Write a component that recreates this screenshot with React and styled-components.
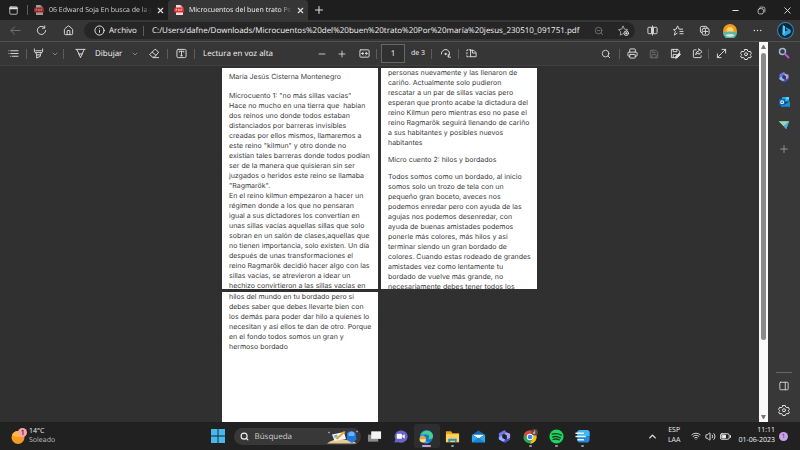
import React from 'react';
import styled, { createGlobalStyle } from 'styled-components';
import {
  ChevronDown,
  ChevronUp,
  House,
  Info,
  Minus,
  Plus,
  Printer,
  Save,
  Search,
  Wifi,
  Volume2,
  X,
  ZoomOut,
} from 'lucide-react';

const GlobalStyle = createGlobalStyle`
  * {
    box-sizing: border-box;
  }

  body {
    margin: 0;
    background: #303030;
    color: #f0f0f0;
    font-family: 'Open Sans', 'Noto Sans', sans-serif;
    font-size: 8px;
    text-rendering: geometricPrecision;
  }

  input,
  button {
    text-rendering: inherit;
  }

  svg {
    display: block;
    flex-shrink: 0;
  }
`;

const Desktop = styled.div`
  display: flex;
  flex-direction: column;
  height: 100vh;
  overflow: hidden;
`;

const IconButton = styled.button`
  display: flex;
  align-items: center;
  justify-content: center;
  flex-shrink: 0;
  width: ${props => props.$w || 26}px;
  height: 20px;
  padding: 0;
  border: none;
  background: none;
  color: ${props => (props.$dim ? '#777' : '#e2e2e2')};
`;

const Divider = styled.div`
  width: 1px;
  height: 10px;
  flex-shrink: 0;
  background: #5c5c5c;
`;

/* ---- title bar ---- */

const TitleBar = styled.header`
  display: flex;
  height: 20px;
  flex-shrink: 0;
  align-items: center;
  background: #1e1e1e;
`;

const Tab = styled.div`
  display: flex;
  align-items: center;
  width: 140px;
  height: 20px;
  padding-left: 6px;
  border-radius: 4px 4px 0 0;
  background: ${props => (props.$active ? '#363636' : 'transparent')};
  color: ${props => (props.$active ? '#f4f4f4' : '#d0d0d0')};
`;

const TabTitle = styled.span`
  flex: 1;
  overflow: hidden;
  margin-left: 5px;
  font-size: 7px;
  white-space: nowrap;
  mask-image: linear-gradient(to right, #000 88%, transparent);
`;

const WindowButtons = styled.div`
  display: flex;
  margin-left: auto;
`;

/* ---- address row ---- */

const NavBar = styled.nav`
  display: flex;
  height: 21px;
  flex-shrink: 0;
  align-items: center;
  padding-left: 2px;
  background: #363636;
`;

const AddressBar = styled.div`
  display: flex;
  flex: 1;
  min-width: 0;
  align-items: center;
  height: 17px;
  margin: 0 4px 0 3px;
  padding: 0 2px 0 10px;
  border-radius: 9px;
  background: #262626;
  gap: 4px;
`;

const AddressInput = styled.input`
  flex: 1;
  min-width: 0;
  margin-left: 4px;
  padding: 0;
  border: none;
  outline: none;
  background: none;
  color: #f4f4f4;
  font: 8px 'Open Sans', 'Noto Sans', sans-serif;
`;

const Scheme = styled.span`
  width: 30px;
  font-size: 8px;
`;

/* ---- pdf viewer ---- */

const Workspace = styled.div`
  display: flex;
  flex: 1;
  min-height: 0;
  border-top: 1px solid #505050;
`;

const Viewer = styled.main`
  display: flex;
  flex: 1;
  flex-direction: column;
  min-width: 0;
`;

const PdfToolbar = styled.div`
  display: flex;
  align-items: center;
  height: 24px;
  flex-shrink: 0;
  background: #363636;
  border-bottom: 1px solid #404040;
`;

const ToolGroup = styled.div`
  display: flex;
  align-items: center;
  margin-left: ${props => (props.$end ? 'auto' : 0)};
`;

const TextButton = styled.button`
  padding: 0;
  margin-left: ${props => props.$gap || 0}px;
  width: ${props => props.$w}px;
  border: none;
  background: none;
  color: #f4f4f4;
  font: 8px 'Open Sans', 'Noto Sans', sans-serif;
  text-align: left;
  white-space: nowrap;
`;

const PageInput = styled.input`
  width: 24px;
  height: 19px;
  margin: 0 6px 0 4px;
  padding: 0;
  border: 1px solid #666;
  background: #303030;
  color: #f4f4f4;
  font: 8px 'Open Sans', 'Noto Sans', sans-serif;
  text-align: center;
`;

const PageTotal = styled.label`
  width: 20px;
  font-size: 7px;
`;

const Pages = styled.div`
  display: grid;
  flex: 1;
  grid-template-columns: 156px 156px;
  grid-auto-rows: 221px;
  gap: 3px;
  justify-content: center;
  min-height: 0;
  padding-top: 2px;
  overflow: hidden;
  background: #303030;
`;

const Page = styled.article`
  overflow: hidden;
  padding: ${props => (props.$first ? 4 : 0)}px 0 0 7px;
  background: #fff;
  color: #3a3a3a;
  font: 7px/10px Inter, Roboto, sans-serif;
  white-space: pre;
`;

const Paragraph = styled.p`
  margin: 0 0 ${props => (props.$heading ? 9 : 7)}px;
`;

const Scrollbar = styled.div`
  display: flex;
  flex-direction: column;
  align-items: center;
  justify-content: space-between;
  width: 9px;
  padding: 3px 0;
  background: #fafafa;
`;

const Thumb = styled.div`
  width: 5px;
  flex: 1;
  margin: 4px 0 75px;
  border-radius: 3px;
  background: #8a8a8a;
`;

const SideBar = styled.aside`
  display: flex;
  flex-direction: column;
  align-items: center;
  width: 32px;
  padding-bottom: 2px;
  background: #383838;
`;

const SideTools = styled.div`
  display: flex;
  flex-direction: column;
  gap: 4px;
  padding-top: ${props => (props.$bottom ? 3 : 1)}px;
  margin-top: ${props => (props.$bottom ? 'auto' : 0)};
  border-top: ${props => (props.$bottom ? '1px solid #666' : 'none')};
`;

/* ---- task bar ---- */

const TaskBar = styled.footer`
  display: grid;
  grid-template-columns: 1fr auto 1fr;
  height: 28px;
  flex-shrink: 0;
  align-items: center;
  background: #212121;
`;

const Weather = styled.div`
  display: flex;
  align-items: center;
  gap: 2px;
  padding-left: 11px;
  font-size: 7px;
  line-height: 9px;
`;

const Muted = styled.div`
  color: #bbb;
`;

const Apps = styled.div`
  display: flex;
  align-items: center;
`;

const SearchBox = styled.label`
  display: flex;
  align-items: center;
  gap: 6px;
  width: 127px;
  height: 17px;
  margin: 0 1px 0 3px;
  padding: 0 2px 0 6px;
  border-radius: 9px;
  background: #383838;
`;

const SearchInput = styled.input`
  flex: 1;
  min-width: 0;
  padding: 0;
  border: none;
  outline: none;
  background: none;
  font: 8px 'Open Sans', 'Noto Sans', sans-serif;

  &::placeholder {
    color: #ccc;
  }
`;

const AppButton = styled.button`
  display: flex;
  flex-direction: column;
  align-items: center;
  justify-content: flex-end;
  gap: 1px;
  width: 26px;
  height: 24px;
  padding: 0 0 1px;
  border: none;
  border-radius: 3px;
  background: ${props => (props.$active ? '#2e2e2e' : 'none')};

  &::after {
    content: '';
    width: ${props => (props.$active ? 9 : 3)}px;
    height: 2px;
    border-radius: 1px;
    background: ${props => (props.$active ? '#c9a0dc' : props.$open ? '#999' : 'transparent')};
  }
`;

const Tray = styled.div`
  display: flex;
  align-items: center;
  justify-content: flex-end;
  padding-right: 12px;
  font-size: 7px;
  line-height: 10px;
`;

const TrayIcons = styled.div`
  display: flex;
  align-items: center;
  gap: 4px;
  margin: 0 7px 0 11px;
`;

const Language = styled.div`
  margin-left: 8px;
  text-align: center;
`;

const Clock = styled.time`
  text-align: right;
`;

const Count = styled.div`
  width: 9px;
  height: 9px;
  margin-left: 4px;
  border-radius: 50%;
  background: #c8a2e8;
  color: #3b2150;
  font-size: 6px;
  line-height: 9px;
  text-align: center;
`;

/* line icons, drawn on a 24 grid */
const Line = ({ size = 11, children }) => (
  <svg width={size} height={size} viewBox="0 0 24 24" fill="none" stroke="currentColor" strokeWidth="2" strokeLinecap="round" strokeLinejoin="round">
    {children}
  </svg>
);

const Art = ({ size = 15, children }) => (
  <svg width={size} height={size} viewBox="0 0 32 32">{children}</svg>
);

const PdfIcon = ({ dim }) => (
  <svg width="10" height="10" viewBox="0 0 20 20" opacity={dim ? 0.65 : 1}>
    <path d="M4 0h9l5 5v15H4z" fill="#f2dede" />
    <path d="M13 0l5 5h-5z" fill="#c99" />
    <rect x="0" y="5" width="20" height="10" rx="2" fill="#e02b2b" />
    <path d="M4 12V8h2v2H4M9 8v4h1.500l1-1V9l-1-1H9M14 12V8h3M14 10h2" stroke="#fff" fill="none" />
  </svg>
);

const GearIcon = () => (
  <Line size={12}>
    <path d="M9.500 3h5l.8 3 2.500 1.400 3-.8 2 4.300-2 1.900v1.400l2 1.900-2 3.700-3-.8-2.500 1.400-.8 2.600h-5l-.8-2.600-2.500-1.400-3 .8-2-3.700 2-1.900v-1.400l-2-1.900 2-4.300 3 .8L8.700 6z" />
    <circle cx="12" cy="12.500" r="3" />
  </Line>
);

const CopilotRing = ({ size = 13 }) => (
  <Art size={size}>
    <path d="M16 2L4 9v13l7 4V13l9-6z" fill="#6f74e8" />
    <path d="M20 7l-5 3 6 4v9l7-4V10z" fill="#a9a2f4" />
    <path d="M11 18v8l6 4 11-7v-4l-10 4z" fill="#4b4fc4" />
    <path d="M4 18l7-4v5l7 4-5 4-9-5z" fill="#8fb6ff" />
  </Art>
);

const TitleRow = () => (
  <TitleBar>
    <IconButton $w={27} aria-label="Pestañas">
      <Line size={9}>
        <rect x="2" y="2" width="20" height="20" rx="3" />
        <path d="M3 6h18" strokeWidth="5" />
      </Line>
    </IconButton>
    <Divider />
    <Tab>
      <PdfIcon dim />
      <TabTitle>06 Edward Soja En busca de la ju</TabTitle>
      <IconButton $w={16} aria-label="Cerrar"><X size={9} strokeWidth={3} /></IconButton>
    </Tab>
    <Tab $active>
      <PdfIcon />
      <TabTitle>Microcuentos del buen trato Por</TabTitle>
      <IconButton $w={16} aria-label="Cerrar"><X size={9} strokeWidth={3} /></IconButton>
    </Tab>
    <IconButton $w={22} aria-label="Nueva pestaña"><Plus size={12} /></IconButton>
    <WindowButtons>
      <IconButton aria-label="Minimizar"><Minus size={9} strokeWidth={3} /></IconButton>
      <IconButton aria-label="Restaurar">
        <Line size={9}>
          <rect x="3" y="7" width="14" height="14" rx="4" />
          <path d="M8 3h9q4 0 4 4v9" />
        </Line>
      </IconButton>
      <IconButton aria-label="Cerrar ventana"><X size={11} /></IconButton>
    </WindowButtons>
  </TitleBar>
);

const AddressRow = () => (
  <NavBar>
    <IconButton $dim aria-label="Atrás">
      <Line><path d="M22 12H2M10 4l-8 8 8 8" /></Line>
    </IconButton>
    <IconButton $w={27} aria-label="Actualizar">
      <Line><path d="M21 12a9 9 0 1 1-3-7M19 2v5h-5" /></Line>
    </IconButton>
    <IconButton aria-label="Inicio"><House size={11} /></IconButton>
    <AddressBar>
      <Info size={11} />
      <Scheme>Archivo</Scheme>
      <Divider />
      <AddressInput
        aria-label="Dirección"
        defaultValue="C:/Users/dafne/Downloads/Microcuentos%20del%20buen%20trato%20Por%20maría%20jesus_230510_091751.pdf"
      />
      <IconButton $w={20} $dim aria-label="Zoom"><ZoomOut size={10} /></IconButton>
      <IconButton $w={20} aria-label="Favorito">
        <Line>
          <path d="M11 19l-6 3 1-7-5-5 7-1 3-7 3 7 7 1-3 3" opacity=".7" />
          <circle cx="18" cy="18" r="5" />
          <path d="M18 16v4M16 18h4" />
        </Line>
      </IconButton>
    </AddressBar>
    <IconButton aria-label="Pantalla dividida">
      <Line>
        <path d="M9 5H4q-2 0-2 2v10q0 2 2 2h5zM15 5h5q2 0 2 2v10q0 2-2 2h-5zM12 2v20" />
      </Line>
    </IconButton>
    <IconButton aria-label="Favoritos">
      <Line>
        <path d="M9 18l-6 4 2-8-4-4 6-1 3-7 3 7h8M15 14h7M15 19h7" />
      </Line>
    </IconButton>
    <IconButton aria-label="Colecciones">
      <Line>
        <path d="M6 17q-3 0-3-4V6q0-3 3-3h9q3 0 3 4" />
        <rect x="7" y="7" width="15" height="15" rx="4" />
        <path d="M14 10v9M10 14h9" />
      </Line>
    </IconButton>
    <IconButton aria-label="Perfil">
      <Art size={14}>
        <circle cx="16" cy="16" r="16" fill="#f39a1e" />
        <circle cx="16" cy="15" r="8" fill="#ffd469" />
        <path d="M0 19q16-4 32 0a16 16 0 0 1-32 0" fill="#5eb5a7" />
        <path d="M5 25q11-4 22 0a16 16 0 0 1-22 0" fill="#d7e7cd" />
      </Art>
    </IconButton>
    <IconButton $w={28} aria-label="Más">
      <Line><path d="M5 12h.1M12 12h.1M19 12h.1" strokeWidth="3" /></Line>
    </IconButton>
    <IconButton $w={29} aria-label="Bing">
      <Art size={17}>
        <circle cx="16" cy="16" r="15" fill="#08283f" stroke="#47809b" strokeWidth="2" />
        <path d="M11 6l4 2v10l6-3-4-2-1-3 9 4q3 5-2 8l-9 5-4-3z" fill="#2aa5e8" />
        <path d="M11 6l4 2v13l-4 3z" fill="#4dd0f4" />
      </Art>
    </IconButton>
  </NavBar>
);

const PdfTools = () => (
  <PdfToolbar>
    <ToolGroup>
      <IconButton aria-label="Contenido">
        <Line><path d="M2 6h.1M2 12h.1M5 18h.1M6 6h16M6 12h16M9 18h13" /></Line>
      </IconButton>
      <Divider />
      <IconButton $w={23} aria-label="Resaltar">
        <Line>
          <path d="M3 2v5q0 3 3 3h12q3 0 3-3V2M6 10l2 5h8l2-5M8 15v7l8-4v-3M6 6h12" />
        </Line>
      </IconButton>
      <IconButton $w={10} aria-label="Opciones de resaltado"><ChevronDown size={8} color="#aaa" /></IconButton>
      <IconButton $w={6} as="span"><Divider /></IconButton>
      <IconButton $w={29} aria-label="Lápiz">
        <Line><path d="M2 3h20M4 3l8 18 8-18M8 13h8" /></Line>
      </IconButton>
      <TextButton $w={34}>Dibujar</TextButton>
      <IconButton $w={12} aria-label="Opciones de dibujo"><ChevronDown size={8} color="#aaa" /></IconButton>
      <IconButton aria-label="Borrar">
        <Line>
          <path d="M14 3l7 6-9 11H8l-6-5zM7 9l8 7M9 21h12" />
        </Line>
      </IconButton>
      <Divider />
      <IconButton aria-label="Agregar texto">
        <Line>
          <rect x="2" y="3" width="20" height="18" rx="3" />
          <path d="M7 9V7h10v2M12 7v10M10 17h4" />
        </Line>
      </IconButton>
      <Divider />
      <TextButton $w={109} $gap={8}>Lectura en voz alta</TextButton>
    </ToolGroup>
    <ToolGroup>
      <IconButton $w={20} aria-label="Alejar"><Minus size={10} /></IconButton>
      <IconButton $w={20} aria-label="Acercar"><Plus size={10} /></IconButton>
      <IconButton $w={24} aria-label="Ajustar a la página">
        <Line>
          <rect x="2" y="4" width="20" height="16" rx="2" />
          <path d="M9 9l-3 3 3 3M15 9l3 3-3 3M6 12h4M14 12h4" />
        </Line>
      </IconButton>
      <Divider />
      <PageInput id="page" defaultValue="1" />
      <PageTotal htmlFor="page">de 3</PageTotal>
      <Divider />
      <IconButton aria-label="Girar">
        <Line>
          <path d="M3 13a9 9 0 1 1 15 6M18 14v6h5" />
          <circle cx="12" cy="13" r="1.500" fill="currentColor" />
        </Line>
      </IconButton>
      <Divider />
      <IconButton $w={24} aria-label="Vista de página">
        <Line>
          <path d="M10 4H7M4 4H2v2M2 10v3M2 17v2h3M8 19h2" />
          <path d="M10 4v15h12V10l-5-5h-3v6h7M10 5h4" />
        </Line>
      </IconButton>
    </ToolGroup>
    <ToolGroup $end>
      <IconButton aria-label="Buscar"><Search size={10} /></IconButton>
      <Divider />
      <IconButton $w={24} aria-label="Imprimir"><Printer size={11} /></IconButton>
      <IconButton $w={20} $dim aria-label="Guardar"><Save size={10} /></IconButton>
      <IconButton $w={22} aria-label="Guardar como">
        <Line>
          <path d="M10 21H3V3h14l4 4v3M7 3v5h8V3M7 21v-7h7" />
          <path d="M12 22l1-4 7-7 3 3-7 7z" fill="currentColor" />
        </Line>
      </IconButton>
      <IconButton $w={22} aria-label="Compartir">
        <Line>
          <path d="M9 4H5q-2 0-2 2v13q0 2 2 2h13q2 0 2-2v-2M15 2l7 6-7 6v-3q-5 0-7 4 0-8 7-9z" />
        </Line>
      </IconButton>
      <Divider />
      <IconButton $w={24} aria-label="Pantalla completa">
        <Line><path d="M3 21L21 3M13 3h8v8M3 13v8h8" /></Line>
      </IconButton>
      <IconButton aria-label="Configuración"><GearIcon /></IconButton>
    </ToolGroup>
  </PdfToolbar>
);

const pageOne = `Microcuento 1: "no más sillas vacías"
Hace no mucho en una tierra que  habían
dos reinos uno donde todos estaban
distanciados por barreras invisibles
creadas por ellos mismos, llamaremos a
este reino "kilmun" y otro donde no
existían tales barreras donde todos podían
ser de la manera que quisieran sin ser
juzgados o heridos este reino se llamaba
"Ragmarök".
En el reino kilmun empezaron a hacer un
régimen donde a los que no pensaran
igual a sus dictadores los convertían en
unas sillas vacías aquellas sillas que solo
sobran en un salón de clases,aquellas que
no tienen importancia, solo existen. Un día
después de unas transformaciones el
reino Ragmarök decidió hacer algo con las
sillas vacías, se atrevieron a idear un
hechizo convirtieron a las sillas vacías en`;

const pageTwo = `personas nuevamente y las llenaron de
cariño. Actualmente solo pudieron
rescatar a un par de sillas vacías pero
esperan que pronto acabe la dictadura del
reino Kilmun pero mientras eso no pase el
reino Ragmarök seguirá llenando de cariño
a sus habitantes y posibles nuevos
habitantes`;

const pageTwoStory = `Todos somos como un bordado, al inicio
somos solo un trozo de tela con un
pequeño gran boceto, aveces nos
podemos enredar pero con ayuda de las
agujas nos podemos desenredar, con
ayuda de buenas amistades podemos
ponerle más colores, más hilos y así
terminar siendo un gran bordado de
colores. Cuando estas rodeado de grandes
amistades vez como lentamente tu
bordado de vuelve más grande, no
necesariamente debes tener todos los`;

const pageThree = `hilos del mundo en tu bordado pero si
debes saber que debes llevarte bien con
los demás para poder dar hilo a quienes lo
necesitan y así ellos te dan de otro. Porque
en el fondo todos somos un gran y
hermoso bordado`;

const Document = () => (
  <Pages>
    <Page $first>
      <Paragraph $heading>María Jesús Cisterna Montenegro</Paragraph>
      <Paragraph>{pageOne}</Paragraph>
    </Page>
    <Page>
      <Paragraph>{pageTwo}</Paragraph>
      <Paragraph>Micro cuento 2: hilos y bordados</Paragraph>
      <Paragraph>{pageTwoStory}</Paragraph>
    </Page>
    <Page>
      <Paragraph>{pageThree}</Paragraph>
    </Page>
  </Pages>
);

const Side = () => (
  <SideBar>
    <SideTools>
      <IconButton aria-label="Buscar en la barra">
        <Line size={12}>
          <circle cx="9" cy="9" r="6" stroke="#9fb8d8" strokeWidth="3" />
          <path d="M14 14l7 7" stroke="#b55ad6" strokeWidth="4" />
        </Line>
      </IconButton>
      <IconButton aria-label="Microsoft 365"><CopilotRing size={12} /></IconButton>
      <IconButton aria-label="Outlook">
        <Art size={11}>
          <path d="M9 3h20v13H9z" fill="#28a8ea" />
          <path d="M20 3h9v7h-9z" fill="#50d9ff" />
          <path d="M6 15l13 8 13-8v16H6z" fill="#1490df" />
          <rect x="0" y="9" width="18" height="18" rx="2" fill="#0868b8" />
          <circle cx="9" cy="18" r="4" fill="none" stroke="#fff" strokeWidth="3" />
        </Art>
      </IconButton>
      <IconButton aria-label="Drop">
        <Art size={12}>
          <path d="M2 6h28l-8 21-7-8z" fill="#378bc0" />
          <path d="M2 6h28L15 19z" fill="#a0d99f" />
          <path d="M15 19L30 6l-8 21z" fill="#4fa8e0" />
        </Art>
      </IconButton>
      <IconButton aria-label="Agregar"><Plus size={12} strokeWidth={1} /></IconButton>
    </SideTools>
    <SideTools $bottom>
      <IconButton $w={16} aria-label="Barra lateral">
        <Line size={10}><rect x="2" y="3" width="20" height="18" rx="2" /><path d="M15 3v18" /></Line>
      </IconButton>
      <IconButton $w={16} aria-label="Configuración de la barra"><GearIcon /></IconButton>
    </SideTools>
  </SideBar>
);

const apps = [
  {
    name: 'Vista de tareas',
    art: (
      <Art>
        <rect x="2" y="12" width="22" height="15" fill="#8b8b8b" />
        <rect x="9" y="5" width="21" height="16" fill="#f4f4f4" />
      </Art>
    ),
  },
  {
    name: 'Chat',
    art: (
      <Art>
        <path d="M3 29l2-7a14 13 0 1 1 7 6z" fill="#6a64c8" />
        <rect x="8" y="10" width="11" height="11" rx="2" fill="#fff" />
        <path d="M20 14l5-3v9l-5-3z" fill="#fff" />
      </Art>
    ),
  },
  {
    name: 'Edge',
    active: true,
    art: (
      <Art>
        <circle cx="16" cy="16" r="14" fill="#1479cc" />
        <path d="M3 13C6 2 28-2 30 15q0 8-10 7 5-10-6-11Q7 10 3 13" fill="#48cd91" />
        <path d="M2 16q4-6 11-5-6 4-2 11 5 8 15 4-13 10-22-1z" fill="#32a8e8" />
        <circle cx="8" cy="22" r="7" fill="#eea52b" />
        <path d="M2 22h12v4q-6 4-11 0z" fill="#eee1b1" />
      </Art>
    ),
  },
  {
    name: 'Explorador',
    open: true,
    art: (
      <Art>
        <path d="M2 5h11l3 4h14v19H2z" fill="#e8a51d" />
        <path d="M2 11h28v17H2z" fill="#ffd45c" />
        <path d="M7 28v-7h18v7h-4v-3H11v3z" fill="#268bd0" />
      </Art>
    ),
  },
  {
    name: 'Correo',
    art: (
      <Art>
        <path d="M2 12L16 3l14 9v16H2z" fill="#1467b7" />
        <path d="M4 12h24L16 21z" fill="#fff" />
        <path d="M2 12l14 9 14-9v16H2z" fill="#2fa9ed" />
        <path d="M2 28l14-10 14 10z" fill="#1688d8" />
      </Art>
    ),
  },
  { name: 'Microsoft 365', art: <CopilotRing size={15} /> },
  {
    name: 'Chrome',
    open: true,
    art: (
      <Art>
        <circle cx="15" cy="17" r="14" fill="#2da94f" />
        <path d="M3 10a14 14 0 0 1 24 0H15l-6 10z" fill="#e94235" />
        <path d="M27 10a14 14 0 0 1-12 21l6-11-2-10z" fill="#fbbc05" />
        <circle cx="15" cy="17" r="7" fill="#fff" />
        <circle cx="15" cy="17" r="5" fill="#4285f4" />
        <circle cx="25" cy="7" r="7" fill="#5a463e" />
        <path d="M25 3v7h-3V7h3" stroke="#ddd" strokeWidth="1.500" fill="none" />
      </Art>
    ),
  },
  {
    name: 'Spotify',
    open: true,
    art: (
      <Art>
        <circle cx="16" cy="16" r="15" fill="#1ed760" />
        <path d="M7 11q10-3 19 2M8 17q8-3 16 2M9 22q7-2 13 1" stroke="#173b23" strokeWidth="3" strokeLinecap="round" fill="none" />
      </Art>
    ),
  },
  {
    name: 'Notas',
    open: true,
    art: (
      <Art>
        <rect x="5" y="2" width="26" height="27" rx="6" fill="#2389dc" />
        <path d="M5 9V8q0-6 6-6h14q6 0 6 6v7H5z" fill="#45b5ef" />
        <path d="M1 9h18M1 16h22M5 23h14" stroke="#e8f8ff" strokeWidth="3" />
      </Art>
    ),
  },
];

const Bottom = () => (
  <TaskBar>
    <Weather>
      <Art size={16}>
        <circle cx="14" cy="19" r="13" fill="#f39b22" />
        <path d="M2 14a13 13 0 0 1 24 0q-12 8-24 0" fill="#ffb83d" />
        <circle cx="23" cy="9" r="9" fill="#f7a4ab" />
        <path d="M21 6l3-2v10" stroke="#602b35" strokeWidth="2" fill="none" />
      </Art>
      <div>
        <div>14°C</div>
        <Muted>Soleado</Muted>
      </div>
    </Weather>
    <Apps>
      <IconButton aria-label="Inicio de Windows">
        <Art size={14}>
          <path d="M0 0h15v15H0zM17 0h15v15H17zM0 17h15v15H0zM17 17h15v15H17z" fill="#43b9ee" />
        </Art>
      </IconButton>
      <SearchBox>
        <Search size={9} strokeWidth={3} />
        <SearchInput placeholder="Búsqueda" aria-label="Búsqueda" />
        <svg width="32" height="15" viewBox="0 0 64 30">
          <path d="M0 29q12-9 25-9l22 3q9 2 12 6z" fill="#e6cc92" />
          <path d="M10 11l24-5 4 14-23 4z" fill="#f7f5ee" />
          <path d="M17 19l17-15 3 2-16 15z" fill="#e4a43c" />
          <path d="M13 13l7-2 2 5-7 2z" fill="#80b6cf" />
          <path d="M40 8q8-8 17 0l2 13-9 7-10-6z" fill="#2277df" />
          <path d="M43 8q7-6 12 0v6H43z" fill="#68b4fb" />
          <path d="M4 5l2 2-2 2-2-2zM60 3l2 2-2 2-2-2z" fill="#d7a7ce" />
        </svg>
      </SearchBox>
      {apps.map(app => (
        <AppButton key={app.name} $active={app.active} $open={app.open} aria-label={app.name}>
          {app.art}
        </AppButton>
      ))}
    </Apps>
    <Tray>
      <IconButton $w={14} aria-label="Iconos ocultos"><ChevronUp size={11} strokeWidth={3} /></IconButton>
      <Language>
        <div>ESP</div>
        <div>LAA</div>
      </Language>
      <TrayIcons>
        <Wifi size={10} />
        <Volume2 size={11} />
        <Line size={11}>
          <rect x="1" y="6" width="19" height="12" rx="3" />
          <path d="M5 9h7v6H5z" fill="currentColor" />
          <path d="M23 10v4" />
        </Line>
      </TrayIcons>
      <Clock>
        <div>11:11</div>
        <div>01-06-2023</div>
      </Clock>
      <Count>1</Count>
    </Tray>
  </TaskBar>
);

const App = () => {
  return (
    <Desktop>
      <GlobalStyle />
      <TitleRow />
      <AddressRow />
      <Workspace>
        <Viewer>
          <PdfTools />
          <Document />
        </Viewer>
        <Scrollbar>
          <svg width="5" height="4" viewBox="0 0 5 4"><path d="M0 4h5L3 0H2z" fill="#777" /></svg>
          <Thumb />
          <svg width="5" height="4" viewBox="0 0 5 4"><path d="M0 0h5L3 4H2z" fill="#777" /></svg>
        </Scrollbar>
        <Side />
      </Workspace>
      <Bottom />
    </Desktop>
  );
};

export default App;
